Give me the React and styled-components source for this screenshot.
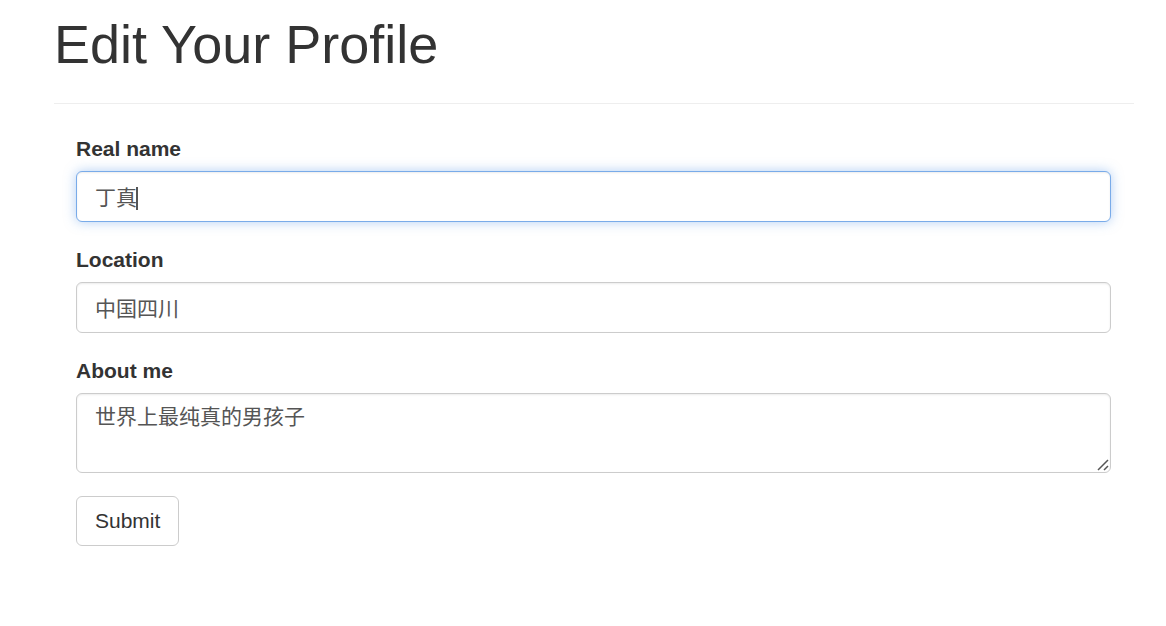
import React from "react";
import styled, { createGlobalStyle, css } from "styled-components";

const GlobalStyle = createGlobalStyle`
  *, *::before, *::after { box-sizing: border-box; }
  body {
    margin: 0;
    background: #fff;
    color: #333;
    font-family: "Liberation Sans", Arial, "Noto Sans CJK SC", sans-serif;
    font-size: 21px;
    line-height: 30px;
  }
`;

const Page = styled.main`
  padding: 0 32px 0 54px;
`;

const PageHeader = styled.header`
  padding: 14px 0 29px;
  border-bottom: 1px solid #eee;
`;

const Title = styled.h1`
  margin: 0;
  font-size: 54px;
  line-height: 60px;
  font-weight: 500;
`;

const Form = styled.form`
  padding: 30px 23px 0 22px;
`;

const FormGroup = styled.div`
  display: flex;
  flex-direction: column;
  margin-bottom: 23px;
`;

const Label = styled.label`
  margin-bottom: 7px;
  font-weight: 700;
`;

const Field = styled.div`
  position: relative;
`;

const control = css`
  display: block;
  width: 100%;
  padding: 8px 18px;
  border: 1px solid #ccc;
  border-radius: 6px;
  background: #fff;
  color: #555;
  font: inherit;
  box-shadow: inset 0 1px 2px rgba(0, 0, 0, 0.08);
  outline: 0;

  &:focus {
    border-color: #79abe9;
    box-shadow: inset 0 1px 2px rgba(0, 0, 0, 0.08), 0 0 12px rgba(102, 160, 233, 0.5);
  }
`;

const TextInput = styled.input`
  ${control}
  height: 51px;
  padding-bottom: 10px;
  caret-color: transparent;
`;

const Caret = styled.span`
  position: absolute;
  top: 16px;
  left: 60px;
  width: 2px;
  height: 23px;
  background: #555;
  pointer-events: none;
`;

const TextArea = styled.textarea`
  ${control}
  height: 80px;
  resize: none;
`;

const ResizeGrip = styled.svg`
  position: absolute;
  right: 2px;
  bottom: 2px;
  width: 12px;
  height: 12px;
  pointer-events: none;
`;

const SubmitButton = styled.button`
  height: 50px;
  padding: 0 18px;
  border: 1px solid #ccc;
  border-radius: 6px;
  background: #fff;
  color: #333;
  font: inherit;
  cursor: pointer;
`;

export default function App() {
  return (
    <>
      <GlobalStyle />
      <Page>
        <PageHeader>
          <Title>Edit Your Profile</Title>
        </PageHeader>
        <Form onSubmit={(e) => e.preventDefault()}>
          <FormGroup>
            <Label htmlFor="name">Real name</Label>
            <Field>
              <TextInput id="name" name="name" type="text" defaultValue="丁真" autoFocus />
              <Caret aria-hidden="true" />
            </Field>
          </FormGroup>
          <FormGroup>
            <Label htmlFor="location">Location</Label>
            <Field>
              <TextInput id="location" name="location" type="text" defaultValue="中国四川" />
            </Field>
          </FormGroup>
          <FormGroup>
            <Label htmlFor="about">About me</Label>
            <Field>
              <TextArea id="about" name="about" defaultValue="世界上最纯真的男孩子" />
              <ResizeGrip viewBox="0 0 12 12" aria-hidden="true">
                <path d="M1 11 L11 1 M7 11 L11 7" stroke="#555" strokeWidth="1.5" fill="none" />
              </ResizeGrip>
            </Field>
          </FormGroup>
          <SubmitButton type="submit">Submit</SubmitButton>
        </Form>
      </Page>
    </>
  );
}
